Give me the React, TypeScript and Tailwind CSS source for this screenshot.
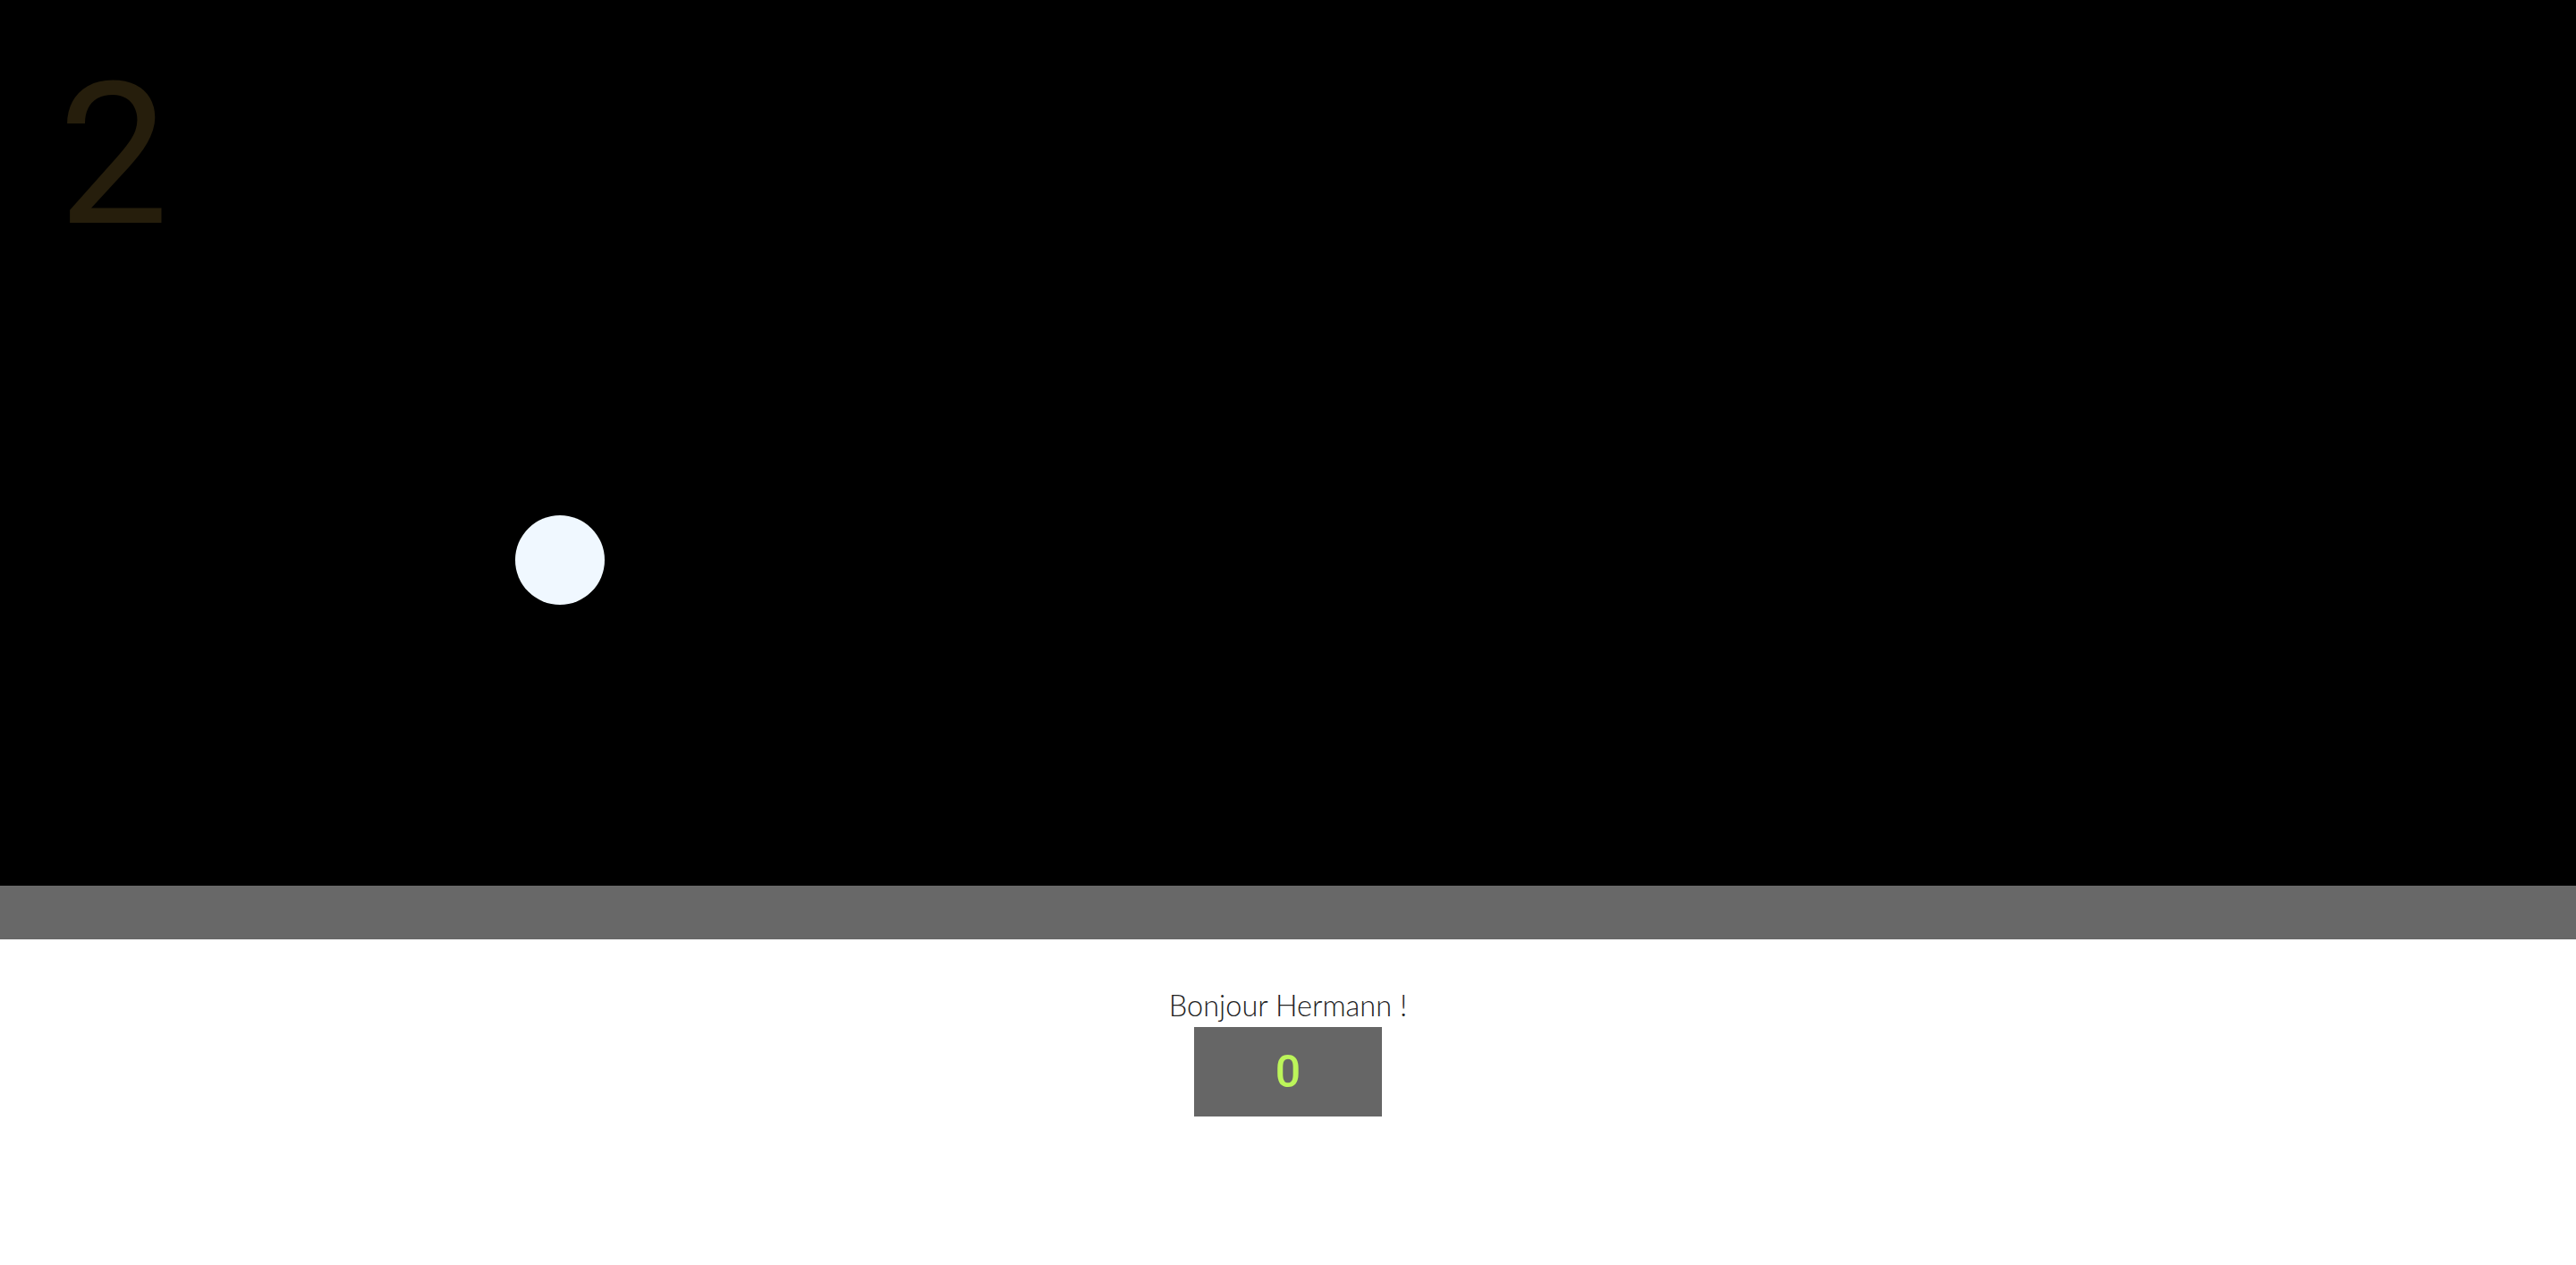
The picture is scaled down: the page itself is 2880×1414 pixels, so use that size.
import React from "react";

export default function App() {
  return (
    <div className="w-full min-h-[1414px] bg-white flex flex-col">
      <div className="relative h-[990px] bg-black overflow-hidden">
        <div
          className="absolute left-[65px] top-[64px] text-[220px] leading-none text-[#261e0c]"
          style={{ fontFamily: "Roboto, 'Liberation Sans', sans-serif" }}
        >
          2
        </div>
        <div className="absolute left-[576px] top-[576px] w-[100px] h-[100px] rounded-full bg-[#f0f8ff]" />
      </div>
      <div className="h-[60px] bg-[#686868]" />
      <div className="flex flex-col items-center pt-[50px]">
        <div
          className="text-[32.5px] leading-[48px] font-light text-[#222222]"
          style={{ fontFamily: "Lato, 'Noto Sans', sans-serif" }}
        >
          Bonjour Hermann !
        </div>
        <div
          className="w-[210px] h-[100px] bg-[#666666] flex items-center justify-center text-[50px] font-medium text-[#bcf55a]"
          style={{ fontFamily: "Roboto, 'Liberation Sans', sans-serif" }}
        >
          0
        </div>
      </div>
    </div>
  );
}
